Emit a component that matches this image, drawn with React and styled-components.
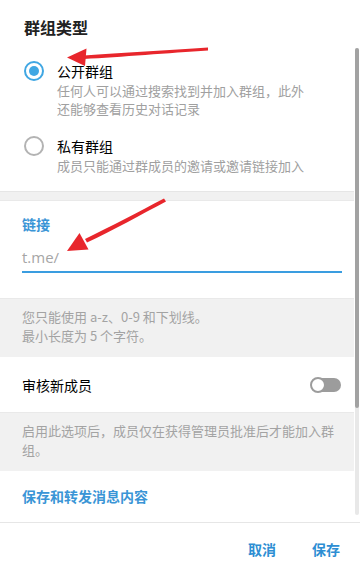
import React from 'react'
import styled, { createGlobalStyle } from 'styled-components'

const Global = createGlobalStyle`
  html, body {
    margin: 0;
    padding: 0;
    background: #ffffff;
  }
  body {
    font-family: "Noto Sans CJK SC", "Open Sans", "Noto Sans", sans-serif;
    -webkit-font-smoothing: antialiased;
  }
  * { box-sizing: border-box; }
`

const Dialog = styled.div`
  position: relative;
  width: 360px;
  height: 575px;
  background: #fff;
  display: flex;
  flex-direction: column;
  overflow: hidden;
`

const Title = styled.div`
  height: 48px;
  padding: 16px 24px 0;
  font-size: 16px;
  line-height: 22px;
  font-weight: 700;
  color: #222;
  flex-shrink: 0;
`

const Scroll = styled.div`
  position: relative;
  height: 474px;
  flex-shrink: 0;
  overflow: hidden;
  padding-right: 6px;
`

const Track = styled.div`
  position: absolute;
  right: 1px;
  top: 0;
  bottom: 7px;
  width: 4px;
  border-radius: 2px;
  background: #e8e8e8;
`

const Thumb = styled.div`
  height: ${p => p.$size}%;
  border-radius: 2px;
  background: #a2a2a2;
`

const Options = styled.div`
  padding: 13px 48px 16px 24px;
  display: flex;
  flex-direction: column;
  gap: 18px;
`

const Option = styled.div`
  display: flex;
  gap: 13px;
`

const Radio = styled.div`
  width: 20px;
  height: 20px;
  border-radius: 50%;
  flex-shrink: 0;
  border: 2px solid ${p => (p.$on ? '#40a7e3' : '#b3b3b3')};
  display: flex;
  align-items: center;
  justify-content: center;
  &::after {
    content: '';
    display: ${p => (p.$on ? 'block' : 'none')};
    width: 10px;
    height: 10px;
    border-radius: 50%;
    background: #40a7e3;
  }
`

const OptionText = styled.div`
  display: flex;
  flex-direction: column;
`

const OptionLabel = styled.div`
  font-size: 14px;
  line-height: 20px;
  color: #000;
`

const OptionDesc = styled.div`
  margin-top: 1px;
  font-size: 13px;
  line-height: 18px;
  color: #a0a0a0;
`

const Divider = styled.div`
  height: 10px;
  background: #f1f1f1;
  box-shadow: inset 0 1px 0 #e6e6e6, inset 0 -1px 0 #e9e9e9;
`

const LinkSection = styled.div`
  padding: 14px 12px 25px 22px;
`

const SectionHead = styled.div`
  font-size: 14px;
  line-height: 18px;
  font-weight: 700;
  color: #3a95d6;
`

const Field = styled.div`
  margin-top: 13px;
  height: 27px;
  border-bottom: 2px solid #3a9de0;
  font-family: "Open Sans", "Noto Sans", sans-serif;
  font-size: 15px;
  line-height: 22px;
  color: #a6a6a6;
`

const Hint = styled.div`
  background: #f1f1f1;
  padding: 9px 18px 12px 22px;
  font-size: 13px;
  line-height: 19px;
  color: #a3a3a3;
  box-shadow: inset 0 1px 0 #e9e9e9;
`

const Row = styled.div`
  height: 55px;
  padding: 0 13px 0 22px;
  display: flex;
  align-items: center;
  justify-content: space-between;
  font-size: 14px;
  color: #000;
`

const Toggle = styled.div`
  position: relative;
  width: 30px;
  height: 14px;
  border-radius: 7px;
  background: #9c9c9c;
  &::after {
    content: '';
    position: absolute;
    left: -1px;
    top: -1px;
    width: 12px;
    height: 12px;
    border-radius: 50%;
    background: #fff;
    border: 2px solid #9c9c9c;
  }
`

const HeadSection = styled.div`
  padding: 16px 12px 0 22px;
`

const Footer = styled.div`
  flex: 1;
  border-top: 1px solid #e6e6e6;
  display: flex;
  justify-content: flex-end;
  align-items: center;
  gap: 16px;
  padding: 0 10px 0 0;
`

const Button = styled.button`
  border: none;
  background: transparent;
  padding: 6px 10px;
  font-family: inherit;
  font-size: 14px;
  font-weight: 700;
  line-height: 18px;
  color: #2d8ed3;
  cursor: pointer;
`

const Marks = styled.svg`
  position: absolute;
  left: 0;
  top: 0;
  pointer-events: none;
`

export default function App() {
  return (
    <>
      <Global />
      <Dialog>
        <Title>群组类型</Title>
        <Scroll>
          <Options>
            <Option>
              <Radio $on />
              <OptionText>
                <OptionLabel>公开群组</OptionLabel>
                <OptionDesc>任何人可以通过搜索找到并加入群组，此外还能够查看历史对话记录</OptionDesc>
              </OptionText>
            </Option>
            <Option>
              <Radio />
              <OptionText>
                <OptionLabel>私有群组</OptionLabel>
                <OptionDesc>成员只能通过群成员的邀请或邀请链接加入</OptionDesc>
              </OptionText>
            </Option>
          </Options>
          <Divider />
          <LinkSection>
            <SectionHead>链接</SectionHead>
            <Field>t.me/</Field>
          </LinkSection>
          <Hint>
            您只能使用 a-z、0-9 和下划线。
            <br />
            最小长度为 5 个字符。
          </Hint>
          <Row>
            审核新成员
            <Toggle />
          </Row>
          <Hint>启用此选项后，成员仅在获得管理员批准后才能加入群组。</Hint>
          <HeadSection>
            <SectionHead>保存和转发消息内容</SectionHead>
          </HeadSection>
          <Track>
            <Thumb $size={77} />
          </Track>
        </Scroll>
        <Footer>
          <Button>取消</Button>
          <Button>保存</Button>
        </Footer>
        <Marks width="360" height="575" viewBox="0 0 360 575">
          <path d="M208 47.5 C170 50 120 53 84 55.5 L84 59 C120 57 170 53 208 50.5 Z" fill="#e8262c" />
          <path d="M67 57.5 L86.5 48.5 L85 66 Z" fill="#e8262c" />
          <path d="M164 198.5 C140 211 110 227 85 239 L87 242.5 C112 231 142 214 166 201.5 Z" fill="#e8262c" />
          <path d="M67 251 L79.5 233 L88.5 249.5 Z" fill="#e8262c" />
        </Marks>
      </Dialog>
    </>
  )
}
